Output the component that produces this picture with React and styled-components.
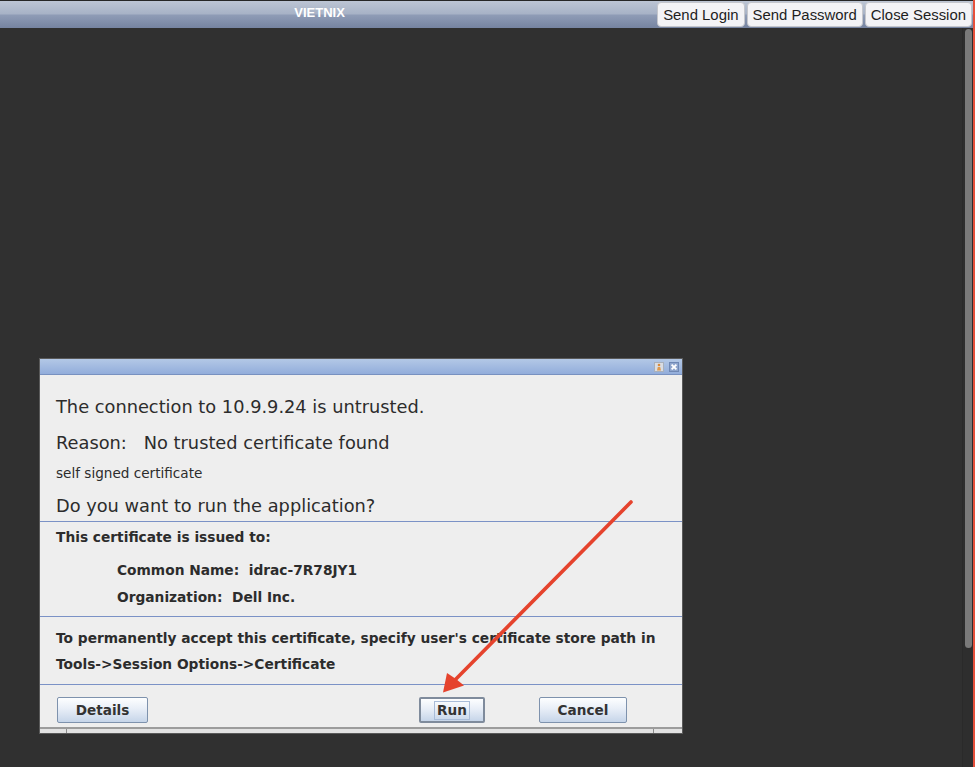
import React from "react";
import styled, { createGlobalStyle } from "styled-components";

const Global = createGlobalStyle`
  html, body { margin: 0; padding: 0; background: #303030; }
  body { font-family: "DejaVu Sans", "Liberation Sans", sans-serif; }
  * { box-sizing: border-box; }
`;

const Page = styled.div`
  position: relative;
  display: flex;
  width: 975px;
  height: 767px;
  overflow: hidden;
  background: #303030;
`;

const Main = styled.div`
  flex: 1;
  display: flex;
  flex-direction: column;
  min-width: 0;
`;

const TopBar = styled.div`
  height: 28px;
  display: flex;
  align-items: flex-start;
  border-top: 1px solid #262626;
  padding-top: 1px;
  background: linear-gradient(#bcc5d4 0%, #a7b2c6 48%, #8f9cb6 52%, #7684a1 100%);
`;

const Title = styled.div`
  flex: 1;
  text-align: center;
  padding-right: 18px;
  font-family: "Liberation Sans", Arial, sans-serif;
  font-weight: bold;
  font-size: 13px;
  line-height: 22px;
  color: #ffffff;
`;

const TopButtons = styled.div`
  display: flex;
  gap: 2px;
  padding-right: 1px;
`;

const TopButton = styled.button`
  height: 25px;
  padding: 1px 5px 0;
  border: 1px solid #c4c6cc;
  border-radius: 4px;
  background: #f3f3f6;
  font-family: "Liberation Sans", Arial, sans-serif;
  font-size: 14.9px;
  color: #1e1e1e;
  line-height: 22px;
  cursor: default;
`;

const Workspace = styled.div`
  flex: 1;
  display: flex;
  background: #303030;
`;

const Desk = styled.div`
  flex: 1;
  padding: 330px 0 0 39px;
`;

const ScrollTrack = styled.div`
  width: 11px;
  border-left: 1px solid #2a2a2a;
  padding: 1px 1px 0 2px;
  background: #2e2e2e;
`;

const ScrollThumb = styled.div`
  width: 7px;
  height: 619px;
  border-radius: 4px;
  background: #7a7a7a;
`;

const EdgeLine = styled.div`
  width: 2px;
  background: #e6503b;
`;

const Dialog = styled.div`
  width: 644px;
  border: 1px solid #5a5a5a;
  background: #eeeeee;
  color: #2c2c2c;
`;

const DialogTitle = styled.div`
  height: 16px;
  display: flex;
  justify-content: flex-end;
  align-items: center;
  gap: 5px;
  padding-right: 3px;
  background: linear-gradient(#b3c8e6, #92addb);
  border-bottom: 1px solid #7891c0;
`;

const Section = styled.div`
  padding: ${(p) => p.$pad};
  border-top: ${(p) => (p.$divided ? "1px solid #7b92c6" : "none")};
`;

const Line = styled.div`
  height: ${(p) => p.$h}px;
  padding-top: ${(p) => p.$pt || 0}px;
  line-height: ${(p) => p.$h - (p.$pt || 0)}px;
  padding-left: ${(p) => p.$indent || 0}px;
  font-size: ${(p) => p.$size}px;
  font-weight: ${(p) => (p.$bold ? "bold" : "normal")};
  white-space: pre;
  margin-top: ${(p) => p.$mt || 0}px;
`;

const ButtonRow = styled.div`
  display: flex;
  align-items: center;
  padding: 12px 55px 4px 17px;
`;

const Spacer = styled.div`
  flex: 1;
`;

const DialogButton = styled.button`
  width: ${(p) => p.$w}px;
  height: 26px;
  margin-left: ${(p) => p.$ml || 0}px;
  padding: 0;
  display: flex;
  align-items: center;
  justify-content: center;
  border: ${(p) => (p.$focused ? "2px solid #7f8b9c" : "1px solid #7e92ad")};
  border-radius: 2px;
  background: linear-gradient(#fdfeff 0%, #e8eef7 45%, #c6d5e9 100%);
  font-family: "DejaVu Sans", sans-serif;
  font-weight: bold;
  font-size: 13.6px;
  color: #333333;
  cursor: default;
`;

const FocusLabel = styled.span`
  padding: 1px 2px;
  border: 1px solid ${(p) => (p.$focused ? "#a9bcd8" : "transparent")};
  line-height: 15px;
`;

const Strip = styled.div`
  display: grid;
  grid-template-columns: 27px 1fr 28px;
  height: 6px;
  border-top: 2px solid #9c9c9c;
  background: #e2e2e2;
`;

const StripCell = styled.div`
  border-right: ${(p) => (p.$last ? "none" : "1px solid #8c8c8c")};
`;

const Overlay = styled.svg`
  position: absolute;
  left: 0;
  top: 0;
  pointer-events: none;
`;

function RestoreIcon() {
  return (
    <svg width="10" height="10" viewBox="0 0 10 10">
      <rect x="0.5" y="0.5" width="9" height="9" fill="#d9dde4" stroke="#a8b0bc" />
      <circle cx="5" cy="3" r="1.3" fill="#d98a3a" />
      <path d="M3 8.5 L3.8 5 L6.2 5 L7 8.5 Z" fill="#e09a4c" />
    </svg>
  );
}

function CloseIcon() {
  return (
    <svg width="10" height="10" viewBox="0 0 10 10">
      <rect x="0.5" y="0.5" width="9" height="9" fill="#8ea5cd" stroke="#6f88b4" />
      <path d="M2.6 2.6 L7.4 7.4 M7.4 2.6 L2.6 7.4" stroke="#ffffff" strokeWidth="1.8" />
    </svg>
  );
}

export default function App() {
  return (
    <Page>
      <Global />
      <Main>
        <TopBar>
          <Title>VIETNIX</Title>
          <TopButtons>
            <TopButton>Send Login</TopButton>
            <TopButton>Send Password</TopButton>
            <TopButton>Close Session</TopButton>
          </TopButtons>
        </TopBar>
        <Workspace>
          <Desk>
            <Dialog>
              <DialogTitle>
                <RestoreIcon />
                <CloseIcon />
              </DialogTitle>
              <Section $pad="14px 16px 0">
                <Line $h={36} $size={17.8}>The connection to 10.9.9.24 is untrusted.</Line>
                <Line $h={36} $size={17.8}>{"Reason:   No trusted certificate found"}</Line>
                <Line $h={25} $size={13.6}>self signed certificate</Line>
                <Line $h={35} $pt={4} $size={17.8}>Do you want to run the application?</Line>
              </Section>
              <Section $divided $pad="0 16px 5px">
                <Line $h={30} $size={13.75} $bold>This certificate is issued to:</Line>
                <Line $h={27} $size={13.75} $bold $indent={61} $mt={5}>{"Common Name:  idrac-7R78JY1"}</Line>
                <Line $h={27} $size={13.75} $bold $indent={61}>{"Organization:  Dell Inc."}</Line>
              </Section>
              <Section $divided $pad="8px 16px 7px">
                <Line $h={26} $size={13.75} $bold>
                  To permanently accept this certificate, specify user's certificate store path in
                </Line>
                <Line $h={26} $size={13.75} $bold>Tools-&gt;Session Options-&gt;Certificate</Line>
              </Section>
              <Section $divided $pad="0">
                <ButtonRow>
                  <DialogButton $w={91}>
                    <FocusLabel>Details</FocusLabel>
                  </DialogButton>
                  <Spacer />
                  <DialogButton $w={66} $focused>
                    <FocusLabel $focused>Run</FocusLabel>
                  </DialogButton>
                  <DialogButton $w={88} $ml={54}>
                    <FocusLabel>Cancel</FocusLabel>
                  </DialogButton>
                </ButtonRow>
                <Strip>
                  <StripCell />
                  <StripCell />
                  <StripCell $last />
                </Strip>
              </Section>
            </Dialog>
          </Desk>
          <ScrollTrack>
            <ScrollThumb />
          </ScrollTrack>
        </Workspace>
      </Main>
      <EdgeLine />
      <Overlay width="975" height="767" viewBox="0 0 975 767">
        <line x1="631" y1="502" x2="455" y2="680" stroke="#e5432d" strokeWidth="3.6" strokeLinecap="round" />
        <polygon points="443,692.5 447,673 456,679 464,685.5" fill="#e5432d" />
      </Overlay>
    </Page>
  );
}
